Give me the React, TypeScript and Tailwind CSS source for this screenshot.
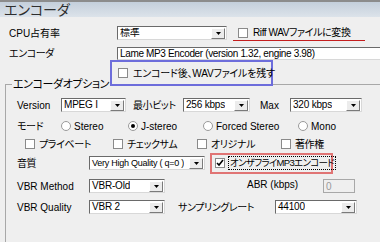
import React from "react";

function Arrow() {
      return <div className="w-[14px] h-[11px] mr-[1px] shrink-0 flex items-center justify-center bg-[#ececec] border border-t-white border-l-white border-r-[#7a7a7a] border-b-[#7a7a7a]">
            <svg width="5" height="3" viewBox="0 0 5 3"><path d="M0 0h5L2.5 3z" fill="#000" /></svg>
      </div>
}

function Select({ w, value, tight }: { w: string; value: string; tight?: boolean }) {
      return <div className={`${w} h-[14px] shrink-0 flex items-center justify-between bg-white border border-t-[#6a6a6a] border-l-[#6a6a6a] border-r-[#d8d8d8] border-b-[#d8d8d8]`}>
            <span className={`pl-[2px] leading-none whitespace-nowrap overflow-hidden ${tight ? "text-[9px] tracking-[-0.25px]" : "tracking-[-0.2px]"}`}>{value}</span>
            <Arrow />
      </div>
}

function Check({ checked }: { checked?: boolean }) {
      return <div className="w-[10px] h-[10px] shrink-0 bg-white border border-[#8a8a8a] flex items-center justify-center">
            {checked && <svg width="8" height="8" viewBox="0 0 8 8"><path d="M1 4l2 2 4-5" stroke="#000" strokeWidth="1.6" fill="none" /></svg>}
      </div>
}

function Radio({ label, on, w }: { label: string; on?: boolean; w: string }) {
      return <div className={`${w} flex items-center shrink-0`}>
            <div className="w-[10px] h-[10px] rounded-full bg-white border border-[#9a9a9a] flex items-center justify-center">
                  {on && <div className="w-[4px] h-[4px] rounded-full bg-black" />}
            </div>
            <span className="ml-[3px] whitespace-nowrap tracking-[0px]">{label}</span>
      </div>
}

function CheckItem({ label, w }: { label: string; w: string }) {
      return <div className={`${w} flex items-center shrink-0`}>
            <Check />
            <span className="ml-[4px] whitespace-nowrap">{label}</span>
      </div>
}

export default function App() {
      return <div className="w-[380px] h-[242px] overflow-hidden bg-[#efefef] text-[10px] tracking-[-0.4px] text-black [font-family:'Liberation_Sans','Noto_Sans_CJK_JP',sans-serif] [font-feature-settings:'palt']">
            {/* Header */}
            <div className="border-t-2 border-[#8c8c8c] h-[17px] bg-gradient-to-b from-[#c4cfdb] to-[#dce3ea] flex items-center pl-[4px]">
                  <span className="text-[14px] tracking-normal text-[#2e2e2e] leading-none">エンコーダ</span>
            </div>

            {/* CPU */}
            <div className="flex items-center h-[16px] mt-[8px]">
                  <span className="w-[117px] pl-[9px] tracking-[0px]">CPU占有率</span>
                  <Select w="w-[110px]" value="標準" />
                  <div className="ml-[6px] pl-[5px] w-[132px] h-[16px] flex items-center border-b border-[#c41e1e]">
                        <Check />
                        <span className="ml-[5px] whitespace-nowrap">Riff WAVファイルに変換</span>
                  </div>
            </div>

            {/* Encoder */}
            <div className="flex items-center h-[13px] mt-[6px]">
                  <span className="w-[117px] pl-[9px]">エンコーダ</span>
                  <div className="flex-1 h-[13px] bg-white border border-t-[#6a6a6a] border-l-[#6a6a6a] border-r-0 border-b-[#d8d8d8] flex items-center pl-[2px] whitespace-nowrap tracking-[-0.35px]">
                        Lame MP3 Encoder (version 1.32, engine 3.98)
                  </div>
            </div>

            <div className="relative z-10 ml-[110px] w-[163px] h-[26px] border-2 border-[#6d6ddb] flex items-center pl-[6px]">
                  <Check />
                  <span className="ml-[5px] whitespace-nowrap tracking-[-0.2px]">エンコード後、WAVファイルを残す</span>
            </div>

            {/* Options group */}
            <div className="relative ml-[5px] mt-[-2px] h-[170px] border-l border-t border-[#a8a8a8] pt-[13px]">
                  <span className="absolute -top-[8px] left-[6px] px-[1px] bg-[#efefef] text-[11px] leading-[15px]">エンコーダオプション</span>

                  <div className="flex items-center h-[14px] pl-[11px]">
                        <span className="w-[44px] tracking-[0px]">Version</span>
                        <Select w="w-[65px]" value="MPEG I" />
                        <span className="ml-[7px] w-[50px]">最小ビット</span>
                        <Select w="w-[67px]" value="256 kbps" />
                        <span className="ml-[10px] w-[30px] tracking-[0px]">Max</span>
                        <Select w="w-[72px]" value="320 kbps" />
                  </div>

                  <div className="flex items-center h-[14px] pl-[11px] mt-[7px]">
                        <span className="w-[44px]">モード</span>
                        <Radio w="w-[67px]" label="Stereo" />
                        <Radio w="w-[75px]" label="J-stereo" on />
                        <Radio w="w-[95px]" label="Forced Stereo" />
                        <Radio w="w-[60px]" label="Mono" />
                  </div>

                  <div className="flex items-center h-[14px] pl-[19px] mt-[4px]">
                        <CheckItem w="w-[88px]" label="プライベート" />
                        <CheckItem w="w-[84px]" label="チェックサム" />
                        <CheckItem w="w-[84px]" label="オリジナル" />
                        <CheckItem w="w-[60px]" label="著作権" />
                  </div>

                  <div className="flex items-center h-[14px] pl-[11px] mt-[5px]">
                        <span className="w-[72px]">音質</span>
                        <Select w="w-[116px]" value="Very High Quality ( q=0 )" tight />
                        <div className="ml-[5px] w-[123px] h-[21px] shrink-0 border-2 border-[#e07474] flex items-center pl-[3px]">
                              <Check checked />
                              <span className="ml-[3px] px-[1px] text-[9.5px] tracking-[-0.7px] leading-[12px] border border-dotted border-black whitespace-nowrap">オンザフライMP3エンコード</span>
                        </div>
                  </div>

                  <div className="flex items-center h-[14px] pl-[11px] mt-[9px] tracking-[0px]">
                        <span className="w-[72px]">VBR Method</span>
                        <Select w="w-[76px]" value="VBR-Old" />
                        <span className="ml-[82px] w-[76px] -mt-[3px]">ABR (kbps)</span>
                        <div className="w-[32px] h-[14px] shrink-0 bg-[#efefef] border border-[#a8a8a8] flex items-center pl-[2px] text-[#9a9a9a]">0</div>
                  </div>

                  <div className="flex items-center h-[14px] pl-[11px] mt-[7px]">
                        <span className="w-[72px] tracking-[0px]">VBR Quality</span>
                        <Select w="w-[76px]" value="VBR 2" />
                        <span className="ml-[13px] w-[97px]">サンプリングレート</span>
                        <Select w="w-[82px]" value="44100" />
                  </div>
            </div>
      </div>
}
